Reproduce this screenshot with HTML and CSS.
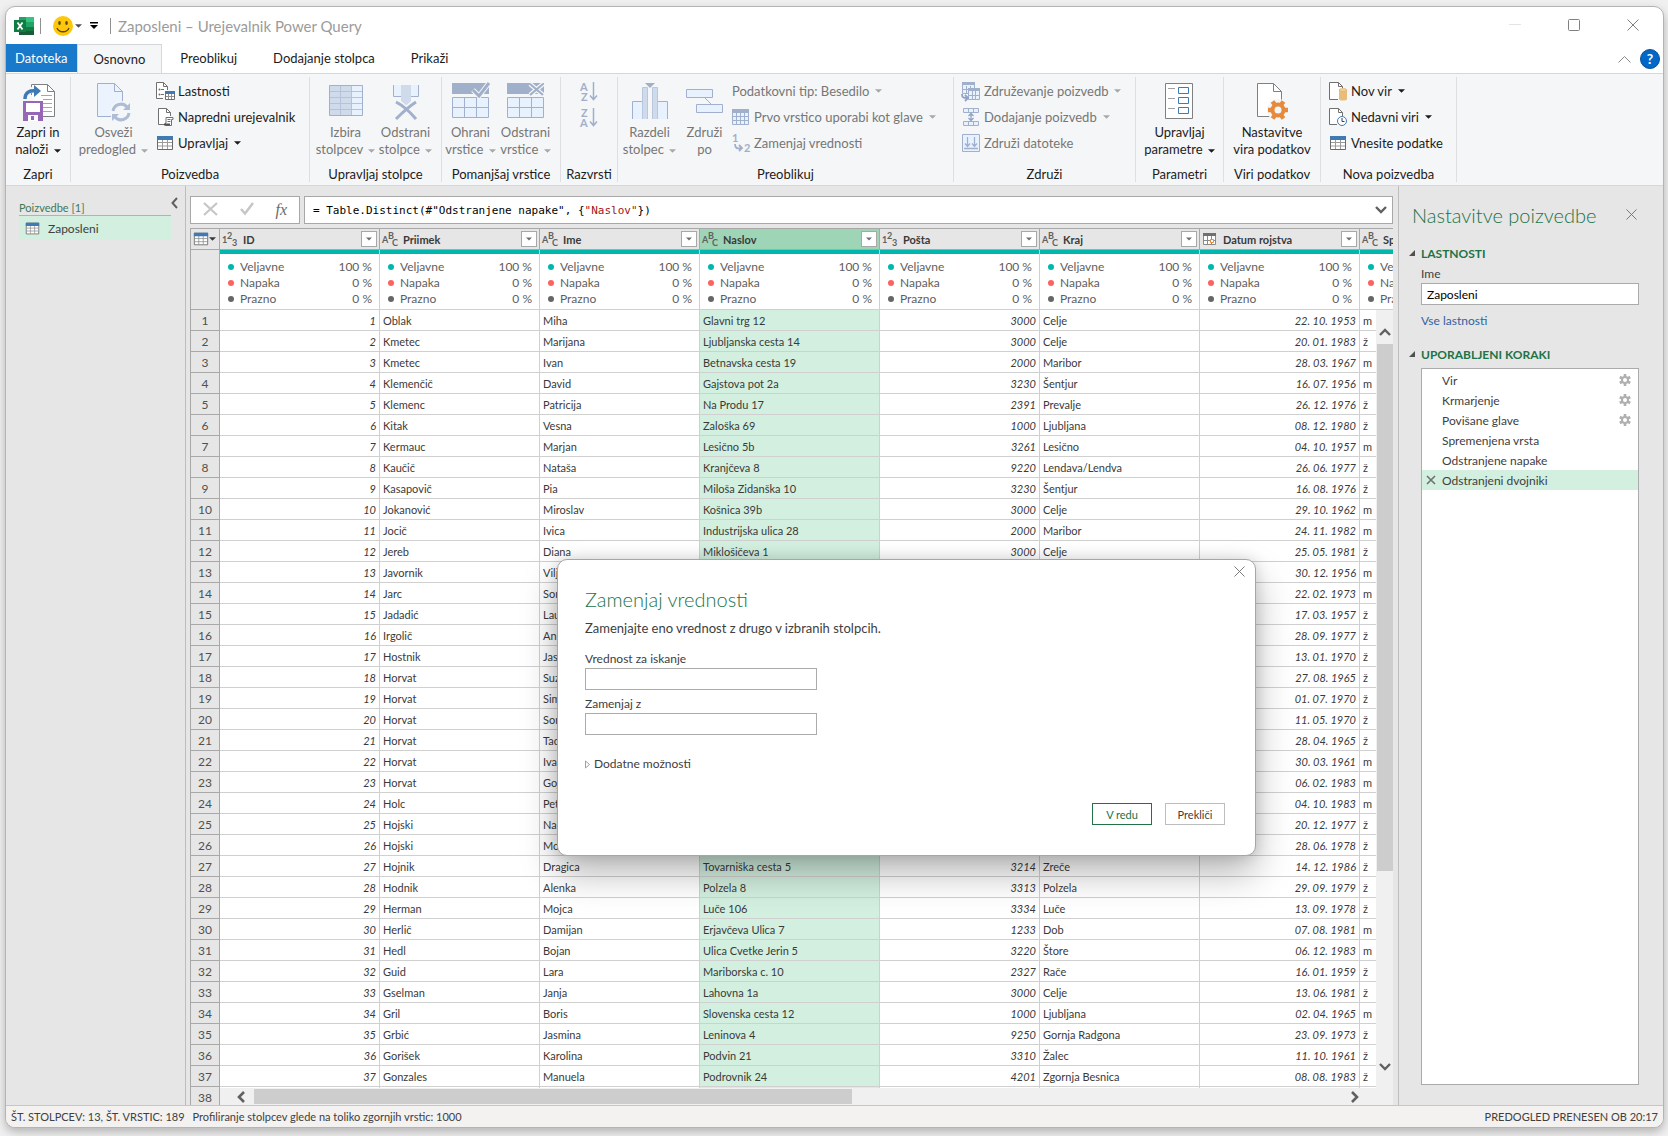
FILE: index.html
```html
<!DOCTYPE html>
<html lang="sl">
<head>
    <meta charset="UTF-8">
    <title>Zaposleni – Urejevalnik Power Query</title>
    <link rel="stylesheet" href="styles.css">
</head>
<body>
<svg class="sprite" aria-hidden="true">
    <symbol id="caret" viewBox="0 0 8 4"><path d="M0 0h8L4 4z"/></symbol>
    <symbol id="close" viewBox="0 0 12 12"><path d="M.5 .5l11 11M11.5 .5l-11 11" fill="none" stroke="currentColor"/></symbol>
    <symbol id="table" viewBox="0 0 18 18">
        <path d="M1.500 2.500h15v13h-15z" fill="#fff" stroke="#6a6a6a"/>
        <path d="M6.500 5v10M11.500 5v10M2 8.500h14M2 12h14" stroke="#9a9a9a" fill="none"/>
        <path d="M1 2h16v4H1z" fill="#3f7ab5"/>
    </symbol>
    <symbol id="gear" viewBox="0 0 12 12">
        <circle cx="6" cy="6" r="3" fill="none" stroke="#b0b0b0" stroke-width="2"/>
        <path d="M6 0v3M6 9v3M.8 3l2.600 1.500M8.600 7.500L11.200 9M.8 9l2.600-1.500M8.600 4.500L11.200 3" stroke="#b0b0b0" stroke-width="2.600"/>
    </symbol>
    <symbol id="chevron" viewBox="0 0 12 8"><path d="M1 1l5 5 5-5" fill="none" stroke="#606060" stroke-width="2.400"/></symbol>
    <symbol id="tri" viewBox="0 0 6 6"><path d="M6 0v6H0z" fill="#505050"/></symbol>
</svg>

<div class="window">
    <header class="titlebar">
        <svg class="excel" viewBox="0 0 20 18">
            <path d="M5 0h15v18H5z" fill="#21a366"/>
            <path d="M12 0h8v5h-8z" fill="#33c481"/>
            <path d="M5 5h7v5H5z" fill="#107c41"/>
            <path d="M5 10h15v8H5z" fill="#185c37"/>
            <path d="M12 10h8v4h-8z" fill="#107c41"/>
            <path d="M0 3h12v12H0z" fill="#107c41"/>
            <path d="M3.500 5.500l5 7M8.500 5.500l-5 7" stroke="#fff" stroke-width="1.800"/>
        </svg>
        <span class="bar"></span>
        <button class="qat smile" aria-label="Povratne informacije">
            <svg width="20" height="20" viewBox="0 0 20 20">
                <circle cx="10" cy="10" r="10" fill="#fdc70c"/>
                <ellipse cx="6.500" cy="7" rx="1.300" ry="2" fill="#5c4508"/>
                <ellipse cx="13.500" cy="7" rx="1.300" ry="2" fill="#5c4508"/>
                <path d="M4 12c2 5 10 5 12 0" fill="none" stroke="#5c4508" stroke-width="1.300"/>
            </svg>
            <svg class="caret"><use href="#caret"/></svg>
        </button>
        <button class="qat" aria-label="Prilagodi orodno vrstico">
            <svg width="8" height="7" viewBox="0 0 8 7"><path d="M0 0h8v1.500H0zM0 3h8L4 7z"/></svg>
        </button>
        <span class="bar"></span>
        <h1>Zaposleni – Urejevalnik Power Query</h1>
        <div class="winbtns">
            <button class="min" aria-label="Minimiraj"><svg width="12" height="12"><path d="M0 5.500h12" stroke="#e4e4e4"/></svg></button>
            <button aria-label="Maksimiraj"><svg width="12" height="12"><rect x=".5" y=".5" width="11" height="11" rx="1" fill="none" stroke="#808080"/></svg></button>
            <button aria-label="Zapri"><svg width="12" height="12"><use href="#close"/></svg></button>
        </div>
    </header>

    <nav class="tabs">
        <button class="file">Datoteka</button>
        <button class="active">Osnovno</button>
        <button>Preoblikuj</button>
        <button>Dodajanje stolpca</button>
        <button>Prikaži</button>
        <span class="help">
            <svg width="13" height="8" viewBox="0 0 13 8"><path d="M.5 7.500l6-6 6 6" fill="none" stroke="#8a8a8a"/></svg>
            <button class="helpbtn" aria-label="Pomoč">?</button>
        </span>
    </nav>

    <div class="ribbon">
        <section class="group g-close">
            <div class="tools">
                <button class="big">
                    <svg viewBox="0 0 34 38">
                        <path d="M10.500 12V1.500h16l7 7v25H20" fill="#fff" stroke="#808080"/>
                        <path d="M26.500 1.500v7h7" fill="none" stroke="#808080"/>
                        <path d="M20 12.500h11M22 16.500h9M22 20.500h9M22 24.500h9M22 28.500h9" stroke="#a6a6a6"/>
                        <path d="M3.500 17c-1-8 5-11 11-9.500" fill="none" stroke="#f4f6f8" stroke-width="6"/>
                        <path d="M4 16c0-7 5-9 12-8" fill="none" stroke="#3f7ab5" stroke-width="3.500"/>
                        <path d="M13 2l7 6-7 6z" fill="#3f7ab5"/>
                        <path d="M2 18h20v20H2z" fill="#9667b7"/>
                        <path d="M5 20h14v9H5zM7 32h10v6H7z" fill="#fff"/>
                        <path d="M10 33h3v4h-3z" fill="#9667b7"/>
                    </svg>
                    <span>Zapri in<br>naloži <svg class="caret"><use href="#caret"/></svg></span>
                </button>
            </div>
            <h2>Zapri</h2>
        </section>

        <section class="group g-query">
            <div class="tools">
                <button class="big wide" disabled>
                    <svg viewBox="0 0 34 38">
                        <path d="M.5 .5h17l8 8v25H.5z" fill="#ebf3fe" stroke="#9fb0cf"/>
                        <path d="M17.500 .5v8h8" fill="none" stroke="#9fb0cf"/>
                        <circle cx="24" cy="29" r="11" fill="#f4f6f8"/>
                        <path d="M16 28a8 8 0 0 1 14-4M32 30a8 8 0 0 1-14 4" fill="none" stroke="#aebcd5" stroke-width="3"/>
                        <path d="M33 20v7h-7zM15 38v-7h7z" fill="#aebcd5"/>
                    </svg>
                    <span>Osveži<br>predogled <svg class="caret"><use href="#caret"/></svg></span>
                </button>
                <div class="stack">
                    <button>
                        <svg viewBox="0 0 18 18"><path d="M7 16.500H.5V.5h7l4 4V8" fill="#fff" stroke="#707070"/><path d="M7.500 .5v4h4" fill="none" stroke="#707070"/><path d="M5 7.500h3M5 12.500h3" stroke="#707070"/><circle cx="3.500" cy="7.500" r="1" fill="#707070"/><circle cx="3.500" cy="12.500" r="1" fill="#707070"/><path d="M9.500 9.500h9v8h-9z" fill="#fff" stroke="#707070"/><path d="M12.500 11v6M15.500 11v6M10 14.500h8" stroke="#909090"/><path d="M9 9h10v3H9z" fill="#3f7ab5"/></svg>
                        Lastnosti
                    </button>
                    <button>
                        <svg viewBox="0 0 18 18"><path d="M8 16.500H2.500V.5h8l4 4V8" fill="#fff" stroke="#707070"/><path d="M10.500 .5v4h4" fill="none" stroke="#707070"/><path d="M10 15V9.500h7v2h-1.500v6H9.500V15z" fill="#fff" stroke="#707070"/><path d="M11.500 11.500h3M11.500 13.500h3" stroke="#707070"/><path d="M8 15.500h6v2H8z" fill="#505050"/></svg>
                        Napredni urejevalnik
                    </button>
                    <button><svg><use href="#table"/></svg>Upravljaj <svg class="caret"><use href="#caret"/></svg></button>
                </div>
            </div>
            <h2>Poizvedba</h2>
        </section>

        <section class="group g-cols">
            <div class="tools">
                <button class="big" disabled>
                    <svg viewBox="0 0 34 38">
                        <path d="M.5 2.500h33v30H.5z" fill="#e8f2ff"/>
                        <path d="M.5 2.500h22v30H.5z" fill="#cfdaeb"/>
                        <path d="M11.500 2v31M22.500 2v31M0 8.500h34M0 14.500h34M0 20.500h34M0 26.500h34" stroke="#b4c2da"/>
                        <path d="M.5 2.500h33v30H.5z" fill="none" stroke="#a0b0cd"/>
                    </svg>
                    <span>Izbira<br>stolpcev <svg class="caret"><use href="#caret"/></svg></span>
                </button>
                <button class="big" disabled>
                    <svg viewBox="0 0 34 38">
                        <path d="M4.500 2v11.500h8V2M21.500 2v11.500h8V2" fill="#e8f2ff" stroke="#a0b0cd"/>
                        <path d="M12 2h10v16l-5 5-5-5z" fill="#cfdaeb"/>
                        <path d="M7 19c8 4 14 10 20 17M27 19c-8 5-14 11-20 17" fill="none" stroke="#f4f6f8" stroke-width="6"/>
                        <path d="M7 19c8 4 14 10 20 17M27 19c-8 5-14 11-20 17" fill="none" stroke="#a0b0cd" stroke-width="3"/>
                    </svg>
                    <span>Odstrani<br>stolpce <svg class="caret"><use href="#caret"/></svg></span>
                </button>
            </div>
            <h2>Upravljaj stolpce</h2>
        </section>

        <section class="group g-rows">
            <div class="tools">
                <button class="big" disabled>
                    <svg class="w38" viewBox="0 0 38 38">
                        <path d="M0 0h37v11H0z" fill="#a0b0cb"/>
                        <path d="M.5 14.500h36v20H.5zM12.500 14.500v20M24.500 14.500v20M.5 24.500h36" fill="#e8f2ff" stroke="#a0b0cd"/>
                        <path d="M21 7l6 6L37 0" fill="none" stroke="#f4f6f8" stroke-width="5"/>
                        <path d="M21 7l6 6L37 0" fill="none" stroke="#a0b0cb" stroke-width="3"/>
                    </svg>
                    <span>Ohrani<br>vrstice <svg class="caret"><use href="#caret"/></svg></span>
                </button>
                <button class="big" disabled>
                    <svg class="w38" viewBox="0 0 38 38">
                        <path d="M0 0h37v11H0z" fill="#a0b0cb"/>
                        <path d="M.5 14.500h36v20H.5zM12.500 14.500v20M24.500 14.500v20M.5 24.500h36" fill="#e8f2ff" stroke="#a0b0cd"/>
                        <path d="M23 1l13 11M36 1L23 12" fill="none" stroke="#f4f6f8" stroke-width="4.500"/>
                        <path d="M23 1l13 11M36 1L23 12" fill="none" stroke="#a0b0cb" stroke-width="2.200"/>
                    </svg>
                    <span>Odstrani<br>vrstice <svg class="caret"><use href="#caret"/></svg></span>
                </button>
            </div>
            <h2>Pomanjšaj vrstice</h2>
        </section>

        <section class="group g-sort">
            <div class="tools sorts">
                <button disabled aria-label="Razvrsti naraščajoče">
                    <svg width="18" height="20" viewBox="0 0 18 20"><text x="0" y="9">A</text><text x="1" y="19">Z</text><path d="M13.500 0v17M10 13.500l3.500 4 3.500-4" fill="none" stroke="#a0b0cb" stroke-width="1.500"/></svg>
                </button>
                <button disabled aria-label="Razvrsti padajoče">
                    <svg width="18" height="20" viewBox="0 0 18 20"><text x="1" y="9">Z</text><text x="0" y="19">A</text><path d="M13.500 0v17M10 13.500l3.500 4 3.500-4" fill="none" stroke="#a0b0cb" stroke-width="1.500"/></svg>
                </button>
            </div>
            <h2>Razvrsti</h2>
        </section>

        <section class="group g-transform">
            <div class="tools">
                <button class="big" disabled>
                    <svg class="w38" viewBox="0 0 38 38">
                        <path d="M1.500 36V18.500h10V36M26.500 36V18.500h10V36" fill="#e8f2ff" stroke="#a0b0cd"/>
                        <path d="M11.500 36V4.500h5V36M21.500 36V4.500h5V36" fill="#cfdaeb" stroke="#b9c7de"/>
                        <path d="M14 0h10l-5 5z" fill="#a0b0cb"/>
                    </svg>
                    <span>Razdeli<br>stolpec <svg class="caret"><use href="#caret"/></svg></span>
                </button>
                <button class="big" disabled>
                    <svg class="w38" viewBox="0 0 38 38">
                        <path d="M.5 6.500h26v8H.5zM10.500 21.500h26v8h-26z" fill="#e8f2ff" stroke="#a0b0cd"/>
                        <path d="M19 15l6 6" stroke="#a0b0cd"/>
                    </svg>
                    <span>Združi<br>po</span>
                </button>
                <div class="stack">
                    <button disabled>Podatkovni tip: Besedilo <svg class="caret"><use href="#caret"/></svg></button>
                    <button disabled>
                        <svg viewBox="0 0 18 18"><path d="M.5 1.500h16v15H.5z" fill="#e8f2ff" stroke="#a0b0cd"/><path d="M4.500 4v12M8.500 4v12M12.500 4v12M1 8.500h15M1 12.500h15" stroke="#a0b0cd"/><path d="M0 1h17v4H0z" fill="#a0b0cb"/></svg>
                        Prvo vrstico uporabi kot glave <svg class="caret"><use href="#caret"/></svg>
                    </button>
                    <button disabled>
                        <svg viewBox="0 0 18 18"><text x="0" y="8">1</text><text x="12" y="18">2</text><path d="M3 10c0 4 2 5 6 4M7 11l3 3-3 3" fill="none" stroke="#a0b0cb" stroke-width="1.800"/></svg>
                        Zamenjaj vrednosti
                    </button>
                </div>
            </div>
            <h2>Preoblikuj</h2>
        </section>

        <section class="group g-combine">
            <div class="tools">
                <div class="stack">
                    <button disabled>
                        <svg viewBox="0 0 18 18"><path d="M.5 .5h12v11H.5zM4.500 4v8M8.500 4v8M0 7.500h12" fill="#e8f2ff" stroke="#a0b0cd"/><path d="M0 0h13v3H0z" fill="#a0b0cb"/><path d="M6.500 6.500h11v11h-11zM10.500 9v9M13.500 9v9M7 13.500h11" fill="#e8f2ff" stroke="#a0b0cd"/><path d="M6 6h12v3H6z" fill="#a0b0cb"/><path d="M0 12c0 4 2 4 5 4M3 13l3 3-3 3" fill="none" stroke="#8fa3c6" stroke-width="1.800"/></svg>
                        Združevanje poizvedb <svg class="caret"><use href="#caret"/></svg>
                    </button>
                    <button disabled>
                        <svg viewBox="0 0 18 18"><path d="M1.500 .5h15v4h-15zM6.500 .5v4M11.500 .5v4M1.500 13.500h15v4h-15zM6.500 13.500v4M11.500 13.500v4" fill="#e8f2ff" stroke="#a0b0cd"/><path d="M9 5v8M6.500 8L9 5.500 11.500 8M6.500 10L9 12.500l2.500-2.500" fill="none" stroke="#8fa3c6" stroke-width="1.300"/></svg>
                        Dodajanje poizvedb <svg class="caret"><use href="#caret"/></svg>
                    </button>
                    <button disabled>
                        <svg viewBox="0 0 18 18"><path d="M.5 .5h17v17H.5z" fill="#e8f2ff" stroke="#a0b0cd"/><path d="M2 14.500h14M5.500 3v9M3 9.500l2.500 3 2.500-3M12.500 3v9M10 9.500l2.500 3 2.500-3" fill="none" stroke="#a0b0cd" stroke-width="1.300"/></svg>
                        Združi datoteke
                    </button>
                </div>
            </div>
            <h2>Združi</h2>
        </section>

        <section class="group g-params">
            <div class="tools">
                <button class="big">
                    <svg viewBox="0 0 34 38">
                        <path d="M3.500 .5h27v35h-27z" fill="#fff" stroke="#808080"/>
                        <path d="M6 5.500h7M6 15.500h7M6 25.500h7" stroke="#a0a0a0"/>
                        <path d="M16.500 4.500h10v6h-10zM16.500 14.500h10v6h-10zM16.500 24.500h10v6h-10z" fill="none" stroke="#3f7ab5"/>
                    </svg>
                    <span>Upravljaj<br>parametre <svg class="caret"><use href="#caret"/></svg></span>
                </button>
            </div>
            <h2>Parametri</h2>
        </section>

        <section class="group g-source">
            <div class="tools">
                <button class="big">
                    <svg viewBox="0 0 34 38">
                        <path d="M2.500 .5h16l8 8v25h-24z" fill="#fff" stroke="#808080"/>
                        <path d="M18.500 .5v8h8" fill="none" stroke="#808080"/>
                        <circle cx="23" cy="27" r="11" fill="#f4f6f8"/>
                        <circle cx="23" cy="27" r="5.500" fill="none" stroke="#e68a3e" stroke-width="4"/>
                        <path d="M13 27h4M29 27h4M17.500 18.500l3 4M25.500 31.500l3 4M17.500 35.500l3-4M25.500 22.500l3-4" stroke="#e68a3e" stroke-width="4.500"/>
                    </svg>
                    <span>Nastavitve<br>vira podatkov</span>
                </button>
            </div>
            <h2>Viri podatkov</h2>
        </section>

        <section class="group g-new">
            <div class="tools">
                <div class="stack">
                    <button>
                        <svg viewBox="0 0 18 18"><path d="M9 17.500H.5V.5h9l4 4V6" fill="#fff" stroke="#707070"/><path d="M9.500 .5v4h4" fill="none" stroke="#707070"/><path d="M10 8v9c0 2 8 2 8 0V8" fill="#e9bd79"/><ellipse cx="14" cy="8" rx="4" ry="1.500" fill="#f0d09c" stroke="#e0a850" stroke-width=".6"/></svg>
                        Nov vir <svg class="caret"><use href="#caret"/></svg>
                    </button>
                    <button>
                        <svg viewBox="0 0 18 18"><path d="M8 16.500H.5V.5h9l4 4V8" fill="#fff" stroke="#707070"/><path d="M9.500 .5v4h4" fill="none" stroke="#707070"/><circle cx="13" cy="13" r="4.500" fill="#fff" stroke="#3f7ab5"/><path d="M13 10v3.500h2.500" fill="none" stroke="#404040"/></svg>
                        Nedavni viri <svg class="caret"><use href="#caret"/></svg>
                    </button>
                    <button><svg><use href="#table"/></svg>Vnesite podatke</button>
                </div>
            </div>
            <h2>Nova poizvedba</h2>
        </section>
    </div>

    <div class="main">
        <aside class="queries">
            <div class="qhead">
                <span>Poizvedbe [1]</span>
                <button aria-label="Strni"><svg width="7" height="12" viewBox="0 0 7 12"><path d="M6 1L1.500 6 6 11" fill="none" stroke="#606060" stroke-width="2"/></svg></button>
            </div>
            <a class="query" href="#"><svg width="15" height="15"><use href="#table"/></svg>Zaposleni</a>
        </aside>

        <main class="center">
            <div class="formula">
                <div class="fbtns">
                    <button aria-label="Prekliči formulo"><svg width="15" height="14" viewBox="0 0 15 14"><path d="M1 1l13 12M14 1L1 13" stroke="#c6c6c6" stroke-width="2.200"/></svg></button>
                    <button aria-label="Potrdi formulo"><svg width="14" height="13" viewBox="0 0 14 13"><path d="M1 7l4 4.500L13 1" fill="none" stroke="#c6c6c6" stroke-width="2.500"/></svg></button>
                    <button class="fx">fx</button>
                </div>
                <div class="fbox">
                    <code>= Table.Distinct(#"Odstranjene napake", {<em>"Naslov"</em>})</code>
                    <svg width="12" height="8"><use href="#chevron"/></svg>
                </div>
            </div>
            <div class="grid">
                <table>
                    <colgroup>
                        <col class="c-num"><col class="c-std"><col class="c-std"><col class="c-std"><col class="c-wide"><col class="c-std"><col class="c-std"><col class="c-std"><col class="c-std">
                    </colgroup>
                    <thead>
                        <tr id="heads"></tr>
                        <tr id="quality"></tr>
                    </thead>
                    <tbody id="rows"></tbody>
                </table>
                <div class="vscroll">
                    <svg width="12" height="8"><use class="up" href="#chevron"/></svg>
                    <span class="thumb"></span>
                    <svg width="12" height="8"><use href="#chevron"/></svg>
                </div>
                <div class="hscroll">
                    <svg width="8" height="12" viewBox="0 0 8 12"><path d="M7 1L2 6l5 5" fill="none" stroke="#606060" stroke-width="2.600"/></svg>
                    <span class="thumb"></span>
                    <svg width="8" height="12" viewBox="0 0 8 12"><path d="M1 1l5 5-5 5" fill="none" stroke="#606060" stroke-width="2.600"/></svg>
                </div>
            </div>
        </main>

        <aside class="settings">
            <div class="shead">
                <h2>Nastavitve poizvedbe</h2>
                <button aria-label="Zapri podokno"><svg width="11" height="11"><use href="#close"/></svg></button>
            </div>
            <h3><svg width="6" height="6"><use href="#tri"/></svg>LASTNOSTI</h3>
            <div class="props">
                <label for="qname">Ime</label>
                <input id="qname" type="text" value="Zaposleni">
                <a href="#">Vse lastnosti</a>
            </div>
            <h3><svg width="6" height="6"><use href="#tri"/></svg>UPORABLJENI KORAKI</h3>
            <ul class="steps">
                <li>Vir<svg width="12" height="12"><use href="#gear"/></svg></li>
                <li>Krmarjenje<svg width="12" height="12"><use href="#gear"/></svg></li>
                <li>Povišane glave<svg width="12" height="12"><use href="#gear"/></svg></li>
                <li>Spremenjena vrsta</li>
                <li>Odstranjene napake</li>
                <li class="sel"><button aria-label="Izbriši korak"><svg width="10" height="10" viewBox="0 0 10 10"><path d="M1 1l8 8M9 1L1 9" stroke="#707070" stroke-width="1.600"/></svg></button>Odstranjeni dvojniki</li>
            </ul>
        </aside>
    </div>

    <footer class="status">
        <span>ŠT. STOLPCEV: 13, ŠT. VRSTIC: 189</span>
        <span>Profiliranje stolpcev glede na toliko zgornjih vrstic: 1000</span>
        <span class="right">PREDOGLED PRENESEN OB 20:17</span>
    </footer>
</div>

<form class="dialog" role="dialog" aria-labelledby="dlgtitle">
    <button type="button" class="x" aria-label="Zapri pogovorno okno"><svg width="11" height="11"><use href="#close"/></svg></button>
    <h2 id="dlgtitle">Zamenjaj vrednosti</h2>
    <p>Zamenjajte eno vrednost z drugo v izbranih stolpcih.</p>
    <label for="find">Vrednost za iskanje</label>
    <input id="find" type="text">
    <label for="repl">Zamenjaj z</label>
    <input id="repl" type="text">
    <button type="button" class="more"><svg width="5" height="9" viewBox="0 0 5 9"><path d="M.5 1v7l4-3.500z" fill="none" stroke="#a0a0a0"/></svg>Dodatne možnosti</button>
    <div class="actions">
        <button type="button" class="ok">V redu</button>
        <button type="button">Prekliči</button>
    </div>
</form>

<script src="script.js"></script>
</body>
</html>
```
FILE: styles.css
```css
*{
    margin: 0;
    padding: 0;
    box-sizing: border-box;
}
body{
    height: 100vh;
    padding: 6px 4px 8px 5px;
    background: #f0f0f0;
    font-family: "Lato", "Noto Sans", sans-serif;
    font-size: 13px;
    color: #1c1c1c;
    overflow: hidden;
}
button{
    border: 0;
    background: none;
    font: inherit;
    color: inherit;
}
ul{
    list-style: none;
}
h1, h2, h3{
    font-size: inherit;
    font-weight: normal;
}
svg{
    flex: none;
    overflow: visible;
}
.sprite{
    position: absolute;
    width: 0;
    height: 0;
}
.caret{
    width: 7px;
    height: 4px;
    vertical-align: middle;
    fill: currentColor;
}
.window{
    height: 100%;
    display: flex;
    flex-direction: column;
    background: #fff;
    border: 1px solid #b4b4b4;
    border-radius: 10px;
    overflow: hidden;
    box-shadow: 0 4px 10px rgba(0,0,0,.25);
}

/* title bar */
.titlebar{
    flex: 0 0 37px;
    display: flex;
    align-items: center;
    padding: 0 1px 0 8px;
}
.excel{
    width: 20px;
    height: 18px;
    margin-right: 6px;
}
.bar{
    width: 1px;
    height: 16px;
    background: #909090;
}
.qat{
    display: flex;
    align-items: center;
    margin-right: 12px;
}
.smile{
    gap: 2px;
    margin-left: 12px;
    margin-right: 8px;
    color: #505050;
}
.titlebar h1{
    margin-left: 7px;
    font-size: 15px;
    color: #9b9b9b;
}
.winbtns{
    margin-left: auto;
    display: flex;
    color: #808080;
}
.winbtns button{
    width: 59px;
    height: 36px;
}

/* tabs */
.tabs{
    flex: 0 0 29px;
    display: flex;
    border-bottom: 1px solid #d5d8db;
}
.tabs > button{
    height: 28px;
    padding: 0 18px;
}
.tabs .file{
    padding: 0 9px;
    background: #1979ca;
    color: #fff;
}
.tabs .active{
    height: 29px;
    padding: 0 16px;
    background: #f4f6f8;
    border: 1px solid #d5d8db;
    border-bottom: 0;
}
.help{
    margin-left: auto;
    display: flex;
    align-items: center;
    gap: 9px;
    padding-right: 3px;
}
.tabs .helpbtn{
    width: 20px;
    height: 20px;
    border: 1px solid #0b4f94;
    border-radius: 50%;
    background: #0068c8;
    color: #fff;
    font-size: 14px;
    line-height: 18px;
    font-weight: bold;
}

/* ribbon */
.ribbon{
    flex: 0 0 112px;
    display: flex;
    padding: 3px 0;
    background: #f4f6f8;
    border-bottom: 1px solid #d5d8db;
}
.group{
    flex: none;
    display: flex;
    flex-direction: column;
    border-right: 1px solid #dddfe2;
}
.g-close{ width: 65px; }
.g-query{ width: 239px; }
.g-cols{ width: 132px; }
.g-rows{ width: 119px; }
.g-sort{ width: 57px; }
.g-transform{ width: 336px; }
.g-combine{ width: 182px; }
.g-params{ width: 88px; }
.g-source{ width: 97px; }
.g-new{ width: 136px; }
.tools{
    flex: 1;
    display: flex;
    justify-content: center;
    padding-top: 5px;
}
.group h2{
    height: 16px;
    line-height: 16px;
    text-align: center;
}
.big{
    flex: 0 1 60px;
    display: flex;
    flex-direction: column;
    align-items: center;
    gap: 3px;
    padding-top: 1px;
    white-space: nowrap;
}
.wide{
    flex-basis: 85px;
}
.g-rows .tools{
    justify-content: flex-start;
    padding-left: 1px;
}
.g-rows .big, .g-transform .big{
    flex-basis: 55px;
}
.big > svg{
    width: 34px;
    height: 38px;
}
.big .w38{
    width: 38px;
}
.big span{
    line-height: 17px;
}
.big .caret, .stack .caret{
    margin-left: 2px;
}
button:disabled{
    color: #767676;
}
button:disabled .caret{
    color: #a8a8a8;
}
.stack{
    display: flex;
    flex-direction: column;
    gap: 8px;
}
.stack button{
    height: 18px;
    display: flex;
    align-items: center;
    gap: 4px;
    white-space: nowrap;
}
.stack svg{
    width: 18px;
    height: 18px;
}
.stack .caret{
    width: 7px;
    height: 4px;
}
.g-query .stack, .g-transform .stack{
    flex: 1;
}
.g-transform .tools{
    padding-left: 4px;
}
.g-combine .tools, .g-new .tools{
    justify-content: flex-start;
    padding-left: 8px;
}
.g-sort .tools{
    flex-direction: column;
    justify-content: flex-start;
    align-items: center;
    gap: 6px;
}
.sorts button{
    height: 20px;
    line-height: 0;
}
.ribbon text{
    font-size: 11px;
    font-weight: bold;
    fill: #a0b0cb;
}

/* panes */
.main{
    flex: 1;
    min-height: 0;
    display: flex;
    background: #e6e6e6;
}
.queries{
    flex: 0 0 180px;
    padding: 11px 14px 0 13px;
    border-right: 1px solid #bdbdbd;
}
.qhead{
    height: 18px;
    display: flex;
    justify-content: space-between;
    margin-right: -7px;
    font-size: 11px;
    line-height: 22px;
    color: #3d7a58;
}
.qhead button{
    height: 14px;
    line-height: 14px;
}
.query{
    height: 25px;
    display: flex;
    align-items: center;
    gap: 8px;
    padding-left: 6px;
    border-top: 1px solid #9dbfa9;
    background: #d2efdf;
    color: #404040;
    font-size: 12px;
    text-decoration: none;
}
.center{
    flex: 1;
    min-width: 0;
    display: flex;
    flex-direction: column;
    padding: 10px 5px 0 4px;
}
.formula{
    flex: 0 0 28px;
    display: flex;
    gap: 4px;
    margin-bottom: 4px;
}
.fbtns, .fbox{
    background: #fff;
    border: 1px solid #a8a8a8;
    display: flex;
    align-items: center;
}
.fbtns{
    width: 110px;
    justify-content: space-between;
    padding: 0 12px;
}
.fx{
    font: italic 16px "Liberation Serif", serif;
    color: #6a6a6a;
}
.fbox{
    flex: 1;
    justify-content: space-between;
    padding: 0 5px 0 8px;
}
.fbox code{
    font: 11px "DejaVu Sans Mono", monospace;
    color: #000;
}
.fbox em{
    font-style: normal;
    color: #a31515;
}

/* data grid */
.grid{
    flex: 1;
    min-height: 0;
    position: relative;
    overflow: hidden;
    border-left: 1px solid #a8a8a8;
}
.grid table{
    width: 1300px;
    table-layout: fixed;
    border-collapse: separate;
    border-spacing: 0;
    background: #fff;
    font-size: 11px;
    color: #3a3a3a;
}
.c-num{ width: 29px; }
.c-std{ width: 160px; }
.c-wide{ width: 180px; }
th{
    font-weight: normal;
}
#heads th{
    height: 22px;
    background: #e6e6e6;
    border: solid #a8a8a8;
    border-width: 1px 1px 1px 0;
    font-weight: bold;
}
#heads .sel{
    background: #9ed5b7;
}
.hd{
    display: flex;
    align-items: center;
    padding: 0 2px;
}
.hd button{
    width: 16px;
    height: 16px;
    margin-left: auto;
    border: 1px solid #a8a8a8;
    background: #fff;
    color: #707070;
    line-height: 0;
}
.hd button .caret{
    width: 6px;
}
.type{
    width: 16px;
    height: 16px;
    margin-right: 5px;
}
.type text{
    font-size: 9px;
    font-weight: bold;
    fill: #606060;
}
#quality th{
    height: 60px;
    border-right: 1px solid #d0d0d0;
    border-bottom: 1px solid #d0d0d0;
    vertical-align: top;
}
#quality .num, #rows th{
    background: #e6e6e6;
    border-right: 1px solid #a8a8a8;
    border-bottom: 1px solid #a8a8a8;
}
.qual{
    border-top: 4px solid #00b7ad;
    padding: 5px 7px 0 8px;
    font-size: 12px;
    line-height: 16px;
    color: #5e5e5e;
}
.qual div{
    display: flex;
    align-items: center;
    gap: 6px;
}
.qual i{
    width: 6px;
    height: 6px;
    border-radius: 50%;
    background: #00b7ad;
}
.qual .err{
    background: #fd625e;
}
.qual .emp{
    background: #666;
}
.qual b{
    margin-left: auto;
    font-weight: normal;
}
#rows th{
    font-size: 12px;
    color: #505050;
}
#rows td{
    height: 21px;
    padding: 0 3px;
    border-right: 1px solid #d0d0d0;
    border-bottom: 1px solid #d0d0d0;
    white-space: nowrap;
    overflow: hidden;
}
#rows .n{
    text-align: right;
    font-style: italic;
    padding-right: 3px;
}
#rows .sel{
    background: #d2efdf;
}
.vscroll, .hscroll{
    position: absolute;
    display: flex;
    align-items: center;
    background: #f0f0f0;
}
.vscroll{
    top: 82px;
    right: 0;
    bottom: 0;
    width: 17px;
    flex-direction: column;
    padding: 18px 0 34px;
}
.up{
    transform: rotate(180deg);
    transform-origin: 6px 4px;
}
.vscroll .thumb{
    width: 16px;
    height: 527px;
    margin: 8px 0 auto;
    background: #cdcdcd;
}
.hscroll{
    left: 29px;
    right: 17px;
    bottom: 0;
    height: 17px;
    padding: 0 17px;
}
.hscroll .thumb{
    width: 598px;
    height: 15px;
    margin: 0 auto 0 9px;
    background: #cdcdcd;
}

/* settings */
.settings{
    flex: 0 0 265px;
    display: flex;
    flex-direction: column;
    padding: 16px 24px 20px 12px;
    border-left: 1px solid #bdbdbd;
    font-size: 12px;
}
.shead{
    display: flex;
    justify-content: space-between;
    align-items: center;
    height: 26px;
    margin: 0 2px 17px 1px;
    color: #707070;
}
.shead h2{
    font-size: 20px;
    font-weight: 300;
    color: #217346;
}
.settings h3{
    display: flex;
    align-items: center;
    gap: 6px;
    margin-left: -2px;
    height: 16px;
    font-weight: bold;
    color: #217346;
}
.props{
    display: flex;
    flex-direction: column;
    padding: 5px 0 16px 10px;
    color: #404040;
}
.props label{
    line-height: 16px;
}
.props input{
    height: 22px;
    margin: 1px 0 7px;
    padding: 0 5px;
    border: 1px solid #ababab;
    font: inherit;
}
.props a{
    line-height: 18px;
    color: #33619e;
    text-decoration: none;
}
.steps{
    flex: 1;
    margin: 6px 0 0 10px;
    padding-top: 1px;
    background: #fff;
    border: 1px solid #ababab;
    color: #404040;
}
.steps li{
    height: 20px;
    display: flex;
    align-items: center;
    justify-content: space-between;
    padding: 0 7px 0 20px;
}
.steps .sel{
    justify-content: flex-start;
    padding-left: 4px;
    background: #d2efdf;
}
.steps button{
    width: 16px;
    line-height: 0;
    text-align: left;
}

/* status bar */
.status{
    flex: 0 0 22px;
    display: flex;
    align-items: center;
    gap: 8px;
    padding: 0 5px;
    background: #f3f2f1;
    border-top: 1px solid #c6c6c6;
    font-size: 11px;
    color: #404040;
}
.status .right{
    margin-left: auto;
}

/* replace values dialog */
.dialog{
    position: absolute;
    left: 557px;
    top: 559px;
    width: 699px;
    display: flex;
    flex-direction: column;
    align-items: flex-start;
    padding: 24px 30px 30px 27px;
    background: #fff;
    border: 1px solid #a6a6a6;
    border-radius: 10px;
    box-shadow: 0 18px 36px rgba(0,0,0,.28), 0 0 14px rgba(0,0,0,.15);
    font-size: 12px;
    color: #404040;
}
.dialog h2{
    font-size: 20px;
    line-height: 30px;
    font-weight: 300;
    color: #217346;
}
.dialog p{
    margin: 4px 0 12px;
    font-size: 13px;
    line-height: 20px;
}
.dialog label{
    line-height: 18px;
}
.dialog input{
    width: 232px;
    height: 22px;
    margin-bottom: 5px;
    border: 1px solid #ababab;
}
.x{
    position: absolute;
    top: 5px;
    right: 10px;
    color: #707070;
}
.more{
    display: flex;
    align-items: center;
    gap: 4px;
    margin: 14px 0 29px;
    line-height: 20px;
}
.actions{
    align-self: flex-end;
    display: flex;
    gap: 13px;
}
.actions button{
    width: 60px;
    height: 22px;
    border: 1px solid #bdbdbd;
    font-size: 11px;
}
.actions .ok{
    border-color: #217346;
    color: #217346;
}
```
FILE: script.js
```js
var cols = [
    ["ID", "num"], ["Priimek", "abc"], ["Ime", "abc"], ["Naslov", "abc"],
    ["Pošta", "num"], ["Kraj", "abc"], ["Datum rojstva", "date"], ["Sp", "abc"]
];
var selected = 3;
var data = [
    "Oblak|Miha|Glavni trg 12|3000|Celje|22. 10. 1953|m",
    "Kmetec|Marijana|Ljubljanska cesta 14|3000|Celje|20. 01. 1983|ž",
    "Kmetec|Ivan|Betnavska cesta 19|2000|Maribor|28. 03. 1967|m",
    "Klemenčič|David|Gajstova pot 2a|3230|Šentjur|16. 07. 1956|m",
    "Klemenc|Patricija|Na Produ 17|2391|Prevalje|26. 12. 1976|ž",
    "Kitak|Vesna|Zaloška 69|1000|Ljubljana|08. 12. 1980|ž",
    "Kermauc|Marjan|Lesično 5b|3261|Lesično|04. 10. 1957|m",
    "Kaučič|Nataša|Kranjčeva 8|9220|Lendava/Lendva|26. 06. 1977|ž",
    "Kasapovič|Pia|Miloša Zidanška 10|3230|Šentjur|16. 08. 1976|ž",
    "Jokanović|Miroslav|Košnica 39b|3000|Celje|29. 10. 1962|m",
    "Jocič|Ivica|Industrijska ulica 28|2000|Maribor|24. 11. 1982|m",
    "Jereb|Diana|Miklošičeva 1|3000|Celje|25. 05. 1981|ž",
    "Javornik|Vilj||||30. 12. 1956|m",
    "Jarc|Son||||22. 02. 1973|m",
    "Jadadić|Lau||||17. 03. 1957|ž",
    "Irgolič|An||||28. 09. 1977|ž",
    "Hostnik|Jas||||13. 01. 1970|ž",
    "Horvat|Suz||||27. 08. 1965|ž",
    "Horvat|Sim||||01. 07. 1970|ž",
    "Horvat|Son||||11. 05. 1970|ž",
    "Horvat|Tad||||28. 04. 1965|ž",
    "Horvat|Iva||||30. 03. 1961|m",
    "Horvat|Goj||||06. 02. 1983|m",
    "Holc|Pet||||04. 10. 1983|m",
    "Hojski|Na||||20. 12. 1977|ž",
    "Hojski|Mo||||28. 06. 1978|ž",
    "Hojnik|Dragica|Tovarniška cesta 5|3214|Zreče|14. 12. 1986|ž",
    "Hodnik|Alenka|Polzela 8|3313|Polzela|29. 09. 1979|ž",
    "Herman|Mojca|Luče 106|3334|Luče|13. 09. 1978|ž",
    "Herlič|Damijan|Erjavčeva Ulica 7|1233|Dob|07. 08. 1981|m",
    "Hedl|Bojan|Ulica Cvetke Jerin 5|3220|Štore|06. 12. 1983|m",
    "Guid|Lara|Mariborska c. 10|2327|Rače|16. 01. 1959|ž",
    "Gselman|Janja|Lahovna 1a|3000|Celje|13. 06. 1981|ž",
    "Gril|Boris|Slovenska cesta 12|1000|Ljubljana|02. 04. 1965|m",
    "Grbić|Jasmina|Leninova 4|9250|Gornja Radgona|23. 09. 1973|ž",
    "Gorišek|Karolina|Podvin 21|3310|Žalec|11. 10. 1961|ž",
    "Gonzales|Manuela|Podrovnik 24|4201|Zgornja Besnica|08. 08. 1983|ž",
    "||||||"
];
var icons = {
    num: '<text x="0" y="12">1</text><text x="5" y="8">2</text><text x="10" y="15">3</text>',
    abc: '<text x="0" y="12">A</text><text x="6" y="8">B</text><text x="10" y="15">C</text>',
    date: '<path d="M1.500 2.500h12v11h-12zM5.500 5v8M9.500 5v8M2 9.500h11" fill="#fff" stroke="#8a8a8a"/><path d="M1 2h13v3H1z" fill="#707070"/><path d="M8.500 8.500h3v3h-3z" fill="#fff" stroke="#e68a3e"/>'
};

// header and column quality
var heads = '<th><div class="hd"><svg width="16" height="16"><use href="#table"/></svg><svg class="caret"><use href="#caret"/></svg></div></th>';
var quality = '<th class="num"></th>';
cols.forEach(function (c, i) {
    heads += '<th' + (i == selected ? ' class="sel"' : '') + '><div class="hd"><svg class="type" viewBox="0 0 16 16">' + icons[c[1]] + '</svg>' + c[0] +
        '<button aria-label="Filter ' + c[0] + '"><svg class="caret"><use href="#caret"/></svg></button></div></th>';
    quality += '<th><div class="qual"><div><i></i>Veljavne<b>100 %</b></div><div><i class="err"></i>Napaka<b>0 %</b></div><div><i class="emp"></i>Prazno<b>0 %</b></div></div></th>';
});
document.getElementById("heads").innerHTML = heads;
document.getElementById("quality").innerHTML = quality;

// rows
var html = "";
data.forEach(function (line, r) {
    var cells = [line[0] == "|" ? "" : r + 1].concat(line.split("|"));
    html += "<tr><th>" + (r + 1) + "</th>";
    cells.forEach(function (v, i) {
        var cls = i == selected ? "sel" : (cols[i][1] == "abc" ? "" : "n");
        html += '<td class="' + cls + '">' + v + "</td>";
    });
    html += "</tr>";
});
document.getElementById("rows").innerHTML = html;
```
